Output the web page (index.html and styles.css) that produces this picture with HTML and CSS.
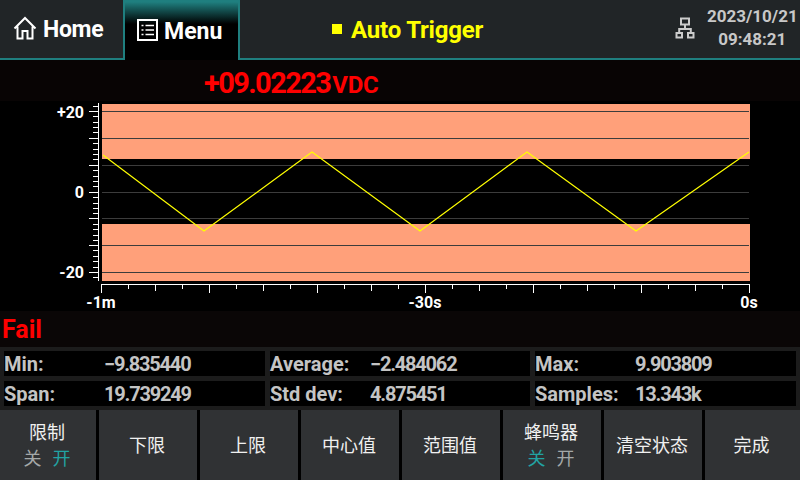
FILE: index.html
```html
<!DOCTYPE html>
<html lang="zh">
<head>
<meta charset="utf-8">
<title>Limit</title>
<link rel="stylesheet" href="styles.css">
</head>
<body>
<div class="screen">
  <header class="topbar">
    <div class="tab tab-home">
      <svg class="tab-icon" width="24" height="24" viewBox="0 0 24 24"><path class="ico" d="M1.500 12.500 12 2l10.500 10.500M4.500 10.500V22.500H9.500V15H14.500V22.500H19.500V10.500"/></svg>
      <span>Home</span>
    </div>
    <div class="tab tab-menu">
      <svg class="tab-icon" width="21" height="22" viewBox="0 0 21 22"><path class="ico" d="M1 1H20V21H1Z"/><path class="ico thin" d="M8.500 6.500H17M8.500 11H17M8.500 15.500H17M4.500 6.500H6.500M4.500 11H6.500M4.500 15.500H6.500"/></svg>
      <span>Menu</span>
    </div>
    <div class="trigger"><i class="trigger-dot"></i><span>Auto Trigger</span></div>
    <div class="status">
      <svg width="20" height="22" viewBox="0 0 20 22"><path class="net" d="M6 1.500H14V7.500H6ZM1.500 16H7V20.500H1.500ZM13 16H18.500V20.500H13ZM10 7.500V12M4.200 16V12H15.800V16"/></svg>
      <div class="clock"><div>2023/10/21</div><div>09:48:21</div></div>
    </div>
  </header>

  <section class="reading"><span class="reading-value">+09.02223</span><span class="reading-unit">VDC</span></section>

  <svg class="chart" width="800" height="210" viewBox="0 101 800 210">
    <rect class="band" x="102" y="104" width="648" height="55"/>
    <rect class="band" x="102" y="224" width="648" height="57"/>
    <path class="grid" d="M102 111.500H749M102 138.500H749M102 165.500H749M102 192.500H749M102 218.500H749M102 245.500H749M102 272.500H749"/>
    <path class="trace" d="M103 155 204 231 312 152 420 231 527 152 636 231 749 152"/>
    <path class="axis" d="M98.500 103V281M89 111.500H98M89 138.500H98M89 165.500H98M89 192.500H98M89 218.500H98M89 245.500H98M89 272.500H98M93 106.500H98M93 116.500H98M93 122.500H98M93 127.500H98M93 132.500H98M93 143.500H98M93 149.500H98M93 154.500H98M93 159.500H98M93 170.500H98M93 176.500H98M93 181.500H98M93 186.500H98M93 197.500H98M93 203.500H98M93 208.500H98M93 213.500H98M93 224.500H98M93 229.500H98M93 235.500H98M93 240.500H98M93 250.500H98M93 256.500H98M93 261.500H98M93 267.500H98M93 277.500H98"/>
    <path class="axis" d="M101.500 284.500H750M101.500 284V293M128.500 284V289M155.500 284V291M182.500 284V289M209.500 284V293M236.500 284V289M263.500 284V291M290.500 284V289M317.500 284V293M344.500 284V289M371.500 284V291M398.500 284V289M425.500 284V293M452.500 284V289M479.500 284V291M506.500 284V289M533.500 284V293M560.500 284V289M587.500 284V291M614.500 284V289M641.500 284V293M668.500 284V289M695.500 284V291M722.500 284V289M749.500 284V293"/>
    <text class="tick-label end" x="84" y="118">+20</text>
    <text class="tick-label end" x="84" y="198">0</text>
    <text class="tick-label end" x="84" y="278">-20</text>
    <text class="tick-label mid" x="101" y="308">-1m</text>
    <text class="tick-label mid" x="425" y="308">-30s</text>
    <text class="tick-label mid" x="749" y="308">0s</text>
  </svg>

  <section class="verdict">Fail</section>

  <section class="stats">
    <div class="stat"><span class="stat-label">Min:</span><span class="stat-value">−9.835440</span></div>
    <div class="stat"><span class="stat-label">Average:</span><span class="stat-value">−2.484062</span></div>
    <div class="stat"><span class="stat-label">Max:</span><span class="stat-value">9.903809</span></div>
    <div class="stat"><span class="stat-label">Span:</span><span class="stat-value">19.739249</span></div>
    <div class="stat"><span class="stat-label">Std dev:</span><span class="stat-value">4.875451</span></div>
    <div class="stat"><span class="stat-label">Samples:</span><span class="stat-value">13.343k</span></div>
  </section>

  <nav class="softkeys">
    <div class="key"><div>限制</div><div class="toggle"><span class="off">关</span><span class="on">开</span></div></div>
    <div class="key">下限</div>
    <div class="key">上限</div>
    <div class="key">中心值</div>
    <div class="key">范围值</div>
    <div class="key"><div>蜂鸣器</div><div class="toggle"><span class="on">关</span><span class="off">开</span></div></div>
    <div class="key">清空状态</div>
    <div class="key">完成</div>
  </nav>
</div>
</body>
</html>
```
FILE: styles.css
```css
* { box-sizing: border-box; }
html, body { margin: 0; padding: 0; background: #000; }
.screen {
  width: 800px;
  height: 480px;
  overflow: hidden;
  display: flex;
  flex-direction: column;
  font-family: Roboto, "Noto Sans CJK SC", sans-serif;
}

/* top bar */
.topbar {
  flex: none;
  height: 60px;
  display: flex;
  background: #212527;
  color: #fff;
}
.tab {
  display: flex;
  align-items: center;
  font-size: 23px;
  font-weight: 700;
}
.tab-home {
  width: 123px;
  padding-left: 13px;
  gap: 6px;
  border-bottom: 2px solid #1f7f7f;
  letter-spacing: -0.300px;
}
.tab-home svg { margin-bottom: 2px; }
.tab-menu {
  width: 117px;
  padding-left: 12px;
  gap: 7px;
  border: 2px solid #1f7f7f;
  border-bottom: 0;
  background: linear-gradient(#1f7f7f 0, #000 22px);
}
.tab-menu svg { margin-bottom: 2px; }
.tab-menu span { margin-left: -1px; }
.ico { fill: none; stroke: #fff; stroke-width: 2; }
.ico.thin { stroke-width: 1.500; }
.trigger {
  flex: 1;
  display: flex;
  align-items: center;
  gap: 9px;
  padding-left: 92px;
  border-bottom: 2px solid #1f7f7f;
  color: #ffff00;
  font-size: 24px;
  font-weight: 700;
  letter-spacing: -0.200px;
}
.trigger span { margin-top: 2px; }
.trigger-dot { width: 10px; height: 10px; background: #ffff00; }
.status {
  width: 125px;
  display: flex;
  align-items: center;
  gap: 12px;
  border-bottom: 2px solid #1f7f7f;
  padding: 0 0 2px 0;
}
.net { fill: none; stroke: #ccc; stroke-width: 2; }
.clock {
  color: #c8c8c8;
  font-size: 17px;
  font-weight: 700;
  line-height: 23px;
  text-align: center;
}

/* main reading */
.reading {
  flex: none;
  height: 41px;
  background: #080404;
  padding-left: 204px;
  color: #ff0000;
  font-weight: 700;
  line-height: 47px;
}
.reading-value { font-size: 29px; letter-spacing: -1.600px; }
.reading-unit { font-size: 24px; letter-spacing: -0.300px; margin-left: 2px; }

/* chart */
.chart { display: block; flex: none; background: #000; overflow: visible; }
.band { fill: #ffa07a; }
.grid { fill: none; stroke: #3c3c3c; stroke-width: 1; }
.trace { fill: none; stroke: #ffff00; stroke-width: 1.200; }
.axis { fill: none; stroke: #fff; stroke-width: 1; }
.tick-label { fill: #fff; font-size: 16px; font-weight: 700; }
.end { text-anchor: end; }
.mid { text-anchor: middle; }

/* result */
.verdict {
  flex: none;
  height: 36px;
  background: #0a0606;
  color: #ff0000;
  padding-left: 2px;
  font-size: 25px;
  font-weight: 700;
  line-height: 37px;
}
.stats {
  flex: none;
  height: 63px;
  background: #1c1c1c;
  padding: 4px;
  display: grid;
  grid-template-columns: 261px 260px 261px;
  grid-auto-rows: 25px;
  gap: 5px;
}
.stat {
  background: #000;
  color: #c4c4c4;
  display: flex;
  align-items: center;
  font-size: 20px;
  font-weight: 700;
}
.stat-label { flex: none; width: 100px; }
.stat-value { letter-spacing: -1.200px; }

/* soft keys */
.softkeys {
  flex: none;
  height: 70px;
  display: grid;
  grid-template-columns: 96px repeat(6, 98px) 95px;
  gap: 3px;
  background: #000;
}
.key {
  background: #303234;
  color: #f0f0f0;
  font-size: 18px;
  line-height: 24px;
  display: flex;
  flex-direction: column;
  align-items: center;
  justify-content: center;
  text-align: center;
  padding: 2px 2px 0 0;
}
.toggle { display: flex; gap: 11px; margin-top: 2px; }
.off { color: #a4a8a8; }
.on { color: #22a3a3; }
```
